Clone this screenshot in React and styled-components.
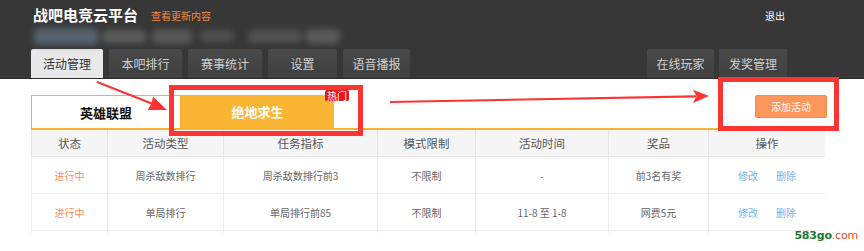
import React from 'react'
import styled, { createGlobalStyle } from 'styled-components'

const GlobalStyle = createGlobalStyle`
  html, body {
    margin: 0;
    padding: 0;
    background: #fff;
  }
  body {
    font-family: "Noto Sans CJK SC", "Noto Sans", sans-serif;
    width: 864px;
    height: 251px;
    overflow: hidden;
  }
`

const Page = styled.div`
  position: relative;
  width: 864px;
  height: 251px;
  overflow: hidden;
`

const Header = styled.header`
  display: flex;
  flex-direction: column;
  height: 79px;
  padding: 0 77px 0 31px;
  background: #373737;
  border-bottom: 1px solid #2a2a2a;
  box-sizing: border-box;
`

const TopRow = styled.div`
  display: flex;
  align-items: center;
  height: 18px;
  margin-top: 6px;
`

const Title = styled.h1`
  margin: 0 0 0 2px;
  font-size: 15px;
  font-weight: 700;
  color: #fff;
  line-height: 18px;
`

const UpdateLink = styled.a`
  margin-left: 13px;
  font-size: 10px;
  color: #f08a3c;
  cursor: pointer;
`

const Logout = styled.a`
  margin-left: auto;
  margin-right: 2px;
  font-size: 10px;
  color: #fff;
  cursor: pointer;
`

const BlurRow = styled.div`
  display: flex;
  align-items: center;
  height: 24px;
  filter: blur(3px);
`

const Blob = styled.span`
  display: block;
  width: ${p => p.w}px;
  height: ${p => p.h || 14}px;
  margin-left: ${p => p.ml || 0}px;
  background: ${p => p.c};
  border-radius: 5px;
`

const NavRow = styled.nav`
  display: flex;
  align-items: flex-end;
  margin-top: auto;
`

const NavGroup = styled.div`
  display: flex;
  gap: ${p => p.gap}px;
  margin-left: ${p => (p.right ? 'auto' : '0')};
`

const NavTab = styled.a`
  display: flex;
  align-items: center;
  justify-content: center;
  width: ${p => p.w}px;
  height: 29px;
  font-size: 12px;
  border-radius: 2px 2px 0 0;
  color: ${p => (p.active ? '#333' : '#cfcfcf')};
  background: ${p => (p.active ? '#e8e8e8' : 'linear-gradient(#494949, #404040)')};
  cursor: pointer;
`

const Content = styled.main`
  padding: 16px 37px 0 31px;
`

const GameBar = styled.div`
  display: flex;
  align-items: flex-start;
  border-bottom: 2px solid #fbb231;
`

const GameTab = styled.div`
  position: relative;
  display: flex;
  align-items: center;
  justify-content: center;
  width: ${p => (p.active ? 153 : 150)}px;
  height: 33px;
  box-sizing: border-box;
  font-size: 13px;
  font-weight: 700;
  color: ${p => (p.active ? '#fff' : '#111')};
  background: ${p => (p.active ? '#fbb534' : '#fff')};
  border: ${p => (p.active ? 'none' : '1px solid #fbb231')};
  border-bottom: none;
`

const HotBadge = styled.span`
  position: absolute;
  top: -5px;
  right: -15px;
  padding: 0 2px;
  font-size: 10px;
  font-weight: 400;
  line-height: 11px;
  color: #fff;
  background: #e7151c;
  border-radius: 2px;
`

const AddButton = styled.button`
  margin-left: auto;
  width: 72px;
  height: 23px;
  padding: 0;
  font-family: inherit;
  font-size: 10px;
  color: #fff;
  background: #fd965b;
  border: 1px solid #f48a4e;
  border-radius: 2px;
  cursor: pointer;
`

const TableClip = styled.div`
  width: 794px;
  height: 103px;
  overflow: hidden;
`

const Table = styled.table`
  width: 794px;
  border-collapse: collapse;
  table-layout: fixed;
`

const Col = styled.col`
  width: ${p => p.w}px;
`

const Th = styled.th`
  height: 26px;
  padding: 0;
  font-size: 11.5px;
  font-weight: 400;
  color: #555;
  background: #f5f5f5;
  border: 1px solid #e4e4e4;
  border-top: none;
`

const Td = styled.td`
  height: 36px;
  padding: 0;
  text-align: center;
  font-size: 10px;
  color: ${p => p.color || '#666'};
  border: 1px solid #ececec;
`

const ActionLink = styled.a`
  margin: 0 9px;
  color: #77b5ea;
  cursor: pointer;
`

const Annotation = styled.div`
  position: absolute;
  left: ${p => p.x}px;
  top: ${p => p.y}px;
  width: ${p => p.w}px;
  height: ${p => p.h}px;
  box-sizing: border-box;
  border: 5px solid #fd3434;
  pointer-events: none;
`

const ArrowLayer = styled.svg`
  position: absolute;
  left: 0;
  top: 0;
  pointer-events: none;
`

const Watermark = styled.div`
  position: absolute;
  right: 6px;
  bottom: 9px;
  font-family: "DejaVu Sans", sans-serif;
  font-size: 11px;
  letter-spacing: -0.2px;
`

const MarkGreen = styled.span`
  color: #1c7a2c;
  font-weight: 700;
`

const MarkRed = styled.span`
  color: #e8481c;
`

const leftTabs = [
  { label: '活动管理', w: 72, active: true },
  { label: '本吧排行', w: 73 },
  { label: '赛事统计', w: 74 },
  { label: '设置', w: 69 },
  { label: '语音播报', w: 67 },
]

const rightTabs = [
  { label: '在线玩家', w: 67 },
  { label: '发奖管理', w: 68 },
]

const columns = [
  { label: '状态', w: 76 },
  { label: '活动类型', w: 116 },
  { label: '任务指标', w: 154 },
  { label: '模式限制', w: 98 },
  { label: '活动时间', w: 133 },
  { label: '奖品', w: 100 },
  { label: '操作', w: 117 },
]

const rows = [
  { type: '周杀敌数排行', goal: '周杀敌数排行前3', mode: '不限制', time: '-', prize: '前3名有奖' },
  { type: '单局排行', goal: '单局排行前85', mode: '不限制', time: '11-8 至 1-8', prize: '网费5元' },
]

const App = () => {
  return (
    <Page>
      <GlobalStyle />

      <Header>
        <TopRow>
          <Title>战吧电竞云平台</Title>
          <UpdateLink>查看更新内容</UpdateLink>
          <Logout>退出</Logout>
        </TopRow>

        <BlurRow>
          <Blob w={64} h={17} ml={3} c="#56636f" />
          <Blob w={44} h={13} ml={4} c="#5c5c5c" />
          <Blob w={40} h={15} ml={6} c="#575757" />
          <Blob w={34} h={12} ml={8} c="#505050" />
          <Blob w={54} h={13} ml={14} c="#525252" />
          <Blob w={34} h={15} ml={4} c="#5a5a5a" />
        </BlurRow>

        <NavRow>
          <NavGroup gap={6}>
            {leftTabs.map(t => (
              <NavTab key={t.label} w={t.w} active={t.active}>{t.label}</NavTab>
            ))}
          </NavGroup>
          <NavGroup right gap={5}>
            {rightTabs.map(t => (
              <NavTab key={t.label} w={t.w}>{t.label}</NavTab>
            ))}
          </NavGroup>
        </NavRow>
      </Header>

      <Content>
        <GameBar>
          <GameTab>英雄联盟</GameTab>
          <GameTab active>
            绝地求生
            <HotBadge>热门</HotBadge>
          </GameTab>
          <AddButton>添加活动</AddButton>
        </GameBar>

        <TableClip>
          <Table>
            <colgroup>
              {columns.map(c => <Col key={c.label} w={c.w} />)}
            </colgroup>
            <thead>
              <tr>
                {columns.map(c => <Th key={c.label}>{c.label}</Th>)}
              </tr>
            </thead>
            <tbody>
              {rows.map((r, i) => (
                <tr key={i}>
                  <Td color="#fb8d5d">进行中</Td>
                  <Td>{r.type}</Td>
                  <Td>{r.goal}</Td>
                  <Td>{r.mode}</Td>
                  <Td>{r.time}</Td>
                  <Td>{r.prize}</Td>
                  <Td>
                    <ActionLink>修改</ActionLink>
                    <ActionLink>删除</ActionLink>
                  </Td>
                </tr>
              ))}
              <tr>
                {columns.map(c => <Td key={c.label} />)}
              </tr>
            </tbody>
          </Table>
        </TableClip>
      </Content>

      {/* red markup drawn over the screenshot */}
      <Annotation x={169} y={85} w={194} h={51} />
      <Annotation x={718} y={77} w={121} h={54} />

      <ArrowLayer width="864" height="251" viewBox="0 0 864 251">
        <line x1="97" y1="82" x2="153" y2="104" stroke="#fd3434" strokeWidth="2" />
        <polygon points="167,110 147.5,110 151.5,103.6 153,96.5" fill="#fd3434" />
        <line x1="390" y1="102" x2="696" y2="96.3" stroke="#fd3434" strokeWidth="2.2" />
        <polygon points="709,96 693,89.8 696.5,96.3 693,103" fill="#fd3434" />
      </ArrowLayer>

      <Watermark>
        <MarkGreen>583go</MarkGreen><MarkRed>.com</MarkRed>
      </Watermark>
    </Page>
  )
}

export default App
